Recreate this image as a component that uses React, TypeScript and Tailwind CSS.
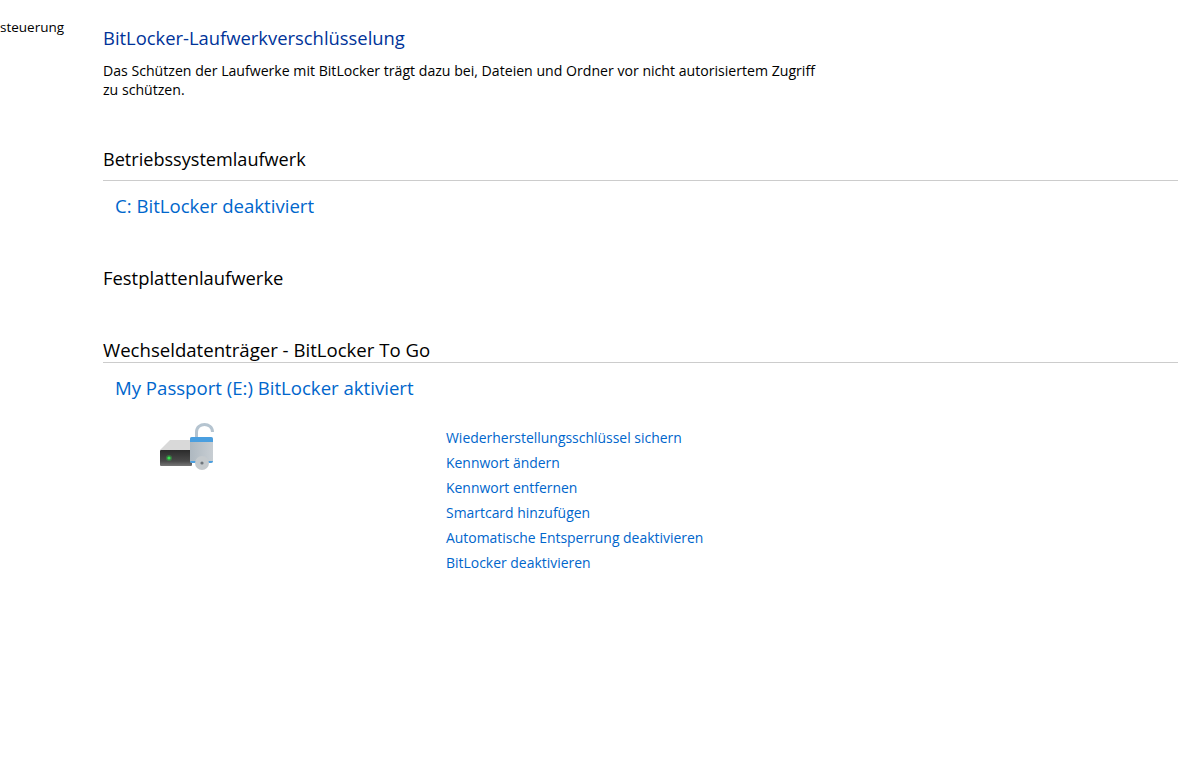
import React from "react";

const actions = [
  "Wiederherstellungsschlüssel sichern",
  "Kennwort ändern",
  "Kennwort entfernen",
  "Smartcard hinzufügen",
  "Automatische Entsperrung deaktivieren",
  "BitLocker deaktivieren",
];

function DriveIcon() {
  return (
    <svg width="60" height="52" viewBox="0 0 60 52" className="block">
      <defs>
        <linearGradient id="front" x1="0" y1="0" x2="0" y2="1">
          <stop offset="0" stopColor="#2b2b2b" />
          <stop offset="0.7" stopColor="#4a4a4a" />
          <stop offset="1" stopColor="#777777" />
        </linearGradient>
        <linearGradient id="lock" x1="0" y1="0" x2="1" y2="0">
          <stop offset="0" stopColor="#aeb8c0" />
          <stop offset="1" stopColor="#c8ced3" />
        </linearGradient>
      </defs>
      <path d="M2 30 L12 20 H36 V30 Z" fill="#d9d9d9" />
      <rect x="2" y="30" width="32" height="16" rx="1" fill="url(#front)" />
      <circle cx="11" cy="38" r="3" fill="#2fe04a" opacity="0.3" />
      <circle cx="11" cy="38" r="1.6" fill="#35e84f" />
      <path d="M38.5 18 V12 C38.5 2 54.5 2 54.5 12" fill="none" stroke="#b5c4d0" strokeWidth="3" />
      <rect x="32" y="17" width="23" height="26" rx="2" fill="url(#lock)" />
      <path d="M32 22 V19 A2 2 0 0 1 34 17 H53 A2 2 0 0 1 55 19 V22 Z" fill="#4a9fe0" />
      <path d="M32 41 H55 V41 A2 2 0 0 1 53 43 H34 A2 2 0 0 1 32 41 Z" fill="#4a9fe0" />
      <circle cx="44" cy="43" r="7" fill="#c5cacd" />
      <circle cx="44" cy="43" r="1.6" fill="#6f767c" />
    </svg>
  );
}

export default function App() {
  return (
    <div className="flex h-[775px] w-[1178px] overflow-hidden bg-white font-['Open_Sans','Noto_Sans',sans-serif] text-black">
      {/* left nav, cut off by the crop */}
      <div className="w-[103px] shrink-0 pt-[18px]">
        <p className="text-[13.5px] leading-[18px]">steuerung</p>
      </div>

      <div className="flex-1">
        <h1 className="mt-[25px] text-[18.4px] leading-[26px] text-[#003399]">BitLocker-Laufwerkverschlüsselung</h1>
        <p className="mt-[10px] w-[722px] text-[14.12px] leading-[19px]">
          Das Schützen der Laufwerke mit BitLocker trägt dazu bei, Dateien und Ordner vor nicht autorisiertem Zugriff zu schützen.
        </p>

        <h2 className="mt-[47px] text-[18.1px] leading-[26px]">Betriebssystemlaufwerk</h2>
        <div className="mt-[8px] h-px bg-[#cccccc]" />
        <a className="mt-[12px] ml-[12px] block text-[18.6px] leading-[26px] text-[#0066cc]">C: BitLocker deaktiviert</a>

        <h2 className="mt-[46px] text-[18.4px] leading-[26px]">Festplattenlaufwerke</h2>

        <h2 className="mt-[46px] text-[18.6px] leading-[25px]">Wechseldatenträger - BitLocker To Go</h2>
        <div className="h-px bg-[#cccccc]" />
        <a className="mt-[12px] ml-[12px] block text-[18.6px] leading-[26px] text-[#0066cc]">My Passport (E:) BitLocker aktiviert</a>

        <div className="mt-[15px] flex">
          <div className="ml-[55px] w-[288px] pt-[4px]">
            <DriveIcon />
          </div>
          <ul className="flex flex-col pt-[9px]">
            {actions.map((a) => (
              <li key={a} className="text-[13.95px] leading-[25px] text-[#0066cc]">{a}</li>
            ))}
          </ul>
        </div>
      </div>
    </div>
  );
}
